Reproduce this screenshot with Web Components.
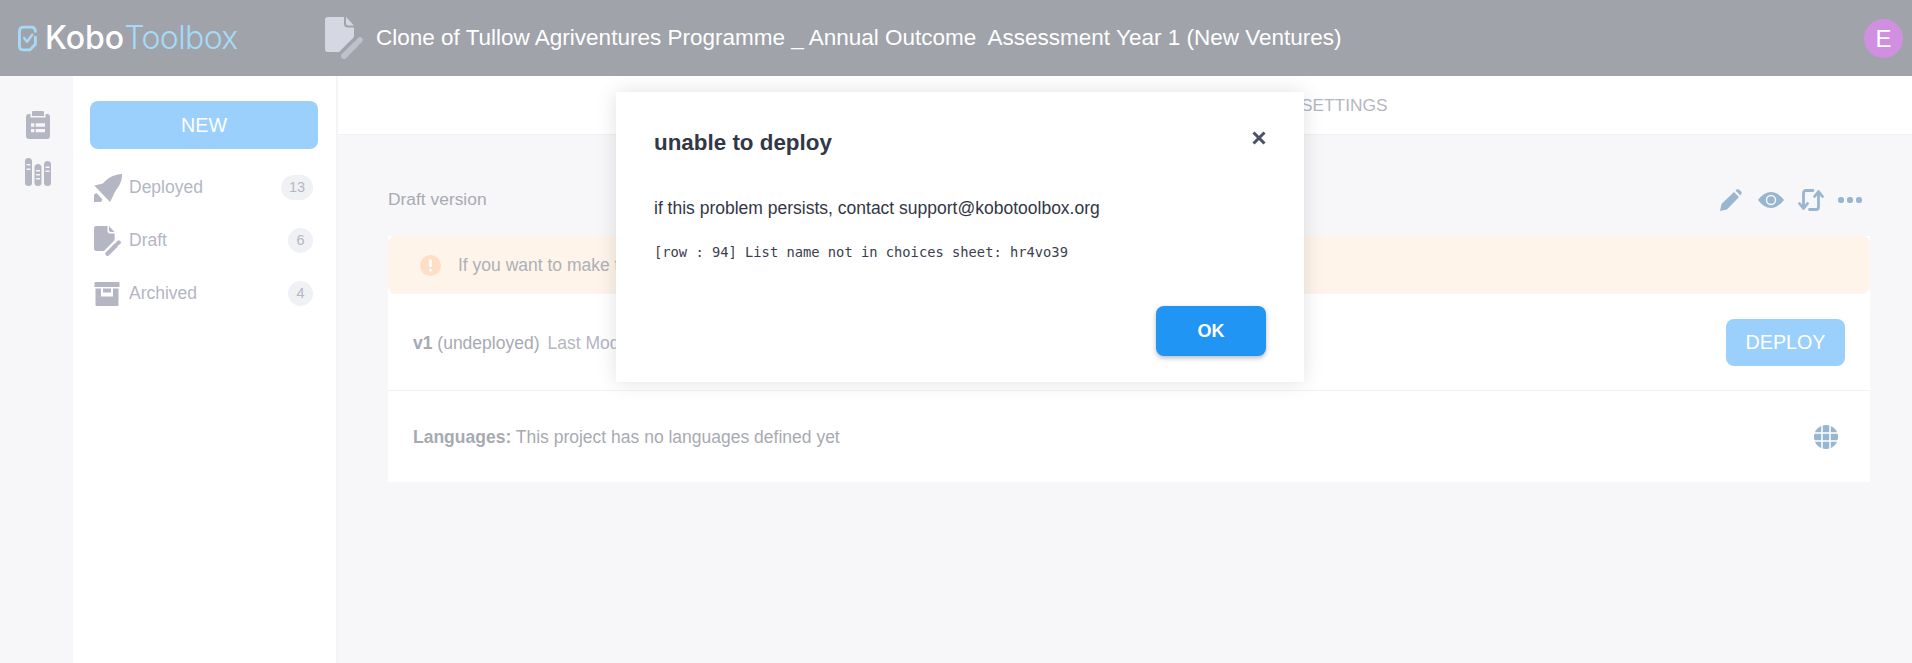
<!DOCTYPE html>
<html>
<head>
<meta charset="utf-8">
<title>KoboToolbox</title>
<style>
  html, body { margin: 0; height: 100%; }
  body { font-family: "Liberation Sans", Arial, sans-serif; overflow: hidden; }
</style>
</head>
<body>
<kobo-app></kobo-app>
<script>
// all icons are drawn on the pixel size they have in the page
const ICONS = {
  draft: { box: '0 0 38 42', body: `
    <path fill="var(--c1)" d="M3 0H19V7Q19 10.500 23 10.500H29V20L14 35H3Q0 35 0 32V3Q0 0 3 0Z"/>
    <path fill="var(--c1)" d="M21 0L29 8.500H23.500Q21 8.500 21 6Z"/>
    <path fill="none" stroke="var(--c2)" stroke-width="6" stroke-linecap="round" d="M19 39L30.500 27.500"/>
    <path fill="none" stroke="var(--c2)" stroke-width="5.500" stroke-linecap="round" d="M33.500 24.500L35 23"/>` },
  clipboard: { box: '0 0 24 28', body: `
    <path fill="currentColor" d="M7 0H17Q18 0 18 1V5H6V1Q6 0 7 0Z"/>
    <path fill="currentColor" fill-rule="evenodd" d="M3 3H4.500V6.500H19.500V3H21Q24 3 24 6V25Q24 28 21 28H3Q0 28 0 25V6Q0 3 3 3ZM5 12.300V15.700H8.300V12.300ZM9.700 12.300V15.700H19V12.300ZM5 18V21.300H8.300V18ZM9.700 18V21.300H19V18Z"/>` },
  library: { box: '0 0 26 28', body: `
    <path fill="currentColor" fill-rule="evenodd" d="M3.500 0Q7 0 7 3.500V25Q7 28 3.500 28Q0 28 0 25V3.500Q0 0 3.500 0ZM1.500 6V7.500H5.500V6ZM1.500 10.500V12H5.500V10.500Z"/>
    <path fill="currentColor" fill-rule="evenodd" d="M13 6Q16.500 6 16.500 9.500V25Q16.500 28 13 28Q9.500 28 9.500 25V9.500Q9.500 6 13 6ZM11 12V13.500H15V12ZM11 16V17.500H15V16ZM11 20V21.500H15V20Z"/>
    <path fill="currentColor" fill-rule="evenodd" d="M22.500 3Q26 3 26 6.500V25Q26 28 22.500 28Q19 28 19 25V6.500Q19 3 22.500 3ZM20.500 8.500V10H24.500V8.500ZM20.500 12.500V14H24.500V12.500Z"/>` },
  rocket: { box: '0 0 28 28', body: `
    <path fill="currentColor" d="M28 0C28.500 6 25.500 12 22 16C21.500 17 20 19 19.500 21L16 28L0.300 11.500L9 9.500C14 3.500 21 0 28 0Z"/>
    <path fill="currentColor" d="M0 28V20.500L2.500 19L8.500 25.500L7 28Z"/>` },
  archive: { box: '0 0 26 24', body: `
    <path fill="currentColor" d="M0.500 1Q0.500 0 1.500 0H24.500Q25.500 0 25.500 1V5H0.500Z"/>
    <path fill="currentColor" fill-rule="evenodd" d="M1.500 6.500H24.500V23Q24.500 24 23.500 24H2.500Q1.500 24 1.500 23ZM7 6.500V14.500H19V6.500H17V10.500H9V6.500Z"/>` },
  pencil: { box: '0 0 22 22', body: `
    <path fill="currentColor" d="M0 22L1.500 15L14 3L19 8L7 20.500ZM15.500 1.500L16.500 0.500Q17.500 0 19 0.500L21.500 3Q22 4.500 21 5.500L20.500 6.500Z"/>` },
  eye: { box: '0 0 26 16', body: `
    <path fill="currentColor" fill-rule="evenodd" d="M0 8Q6 0 13 0Q20 0 26 8Q20 16 13 16Q6 16 0 8ZM13 2.800A5.200 5.200 0 1 0 13 13.200A5.200 5.200 0 1 0 13 2.800Z"/>
    <circle fill="currentColor" cx="13" cy="8" r="3.800"/>` },
  sync: { box: '0 0 26 22', body: `
    <path fill="none" stroke="currentColor" stroke-width="2.800" stroke-linecap="round" stroke-linejoin="round" d="M5.500 19V4Q5.500 1.500 8 1.500H15M1.500 14.500L5.500 19.500L9.500 14.500"/>
    <path fill="none" stroke="currentColor" stroke-width="2.800" stroke-linecap="round" stroke-linejoin="round" d="M20.500 3V18Q20.500 20.500 18 20.500H11.500M16.500 7.500L20.500 2.500L24.500 7.500"/>` },
  dots: { box: '0 0 24 6', body: `
    <rect fill="currentColor" width="6" height="6" rx="2.500"/>
    <rect fill="currentColor" x="9" width="6" height="6" rx="2.500"/>
    <rect fill="currentColor" x="18" width="6" height="6" rx="2.500"/>` },
  globe: { box: '0 0 24 24', body: `
    <circle fill="currentColor" cx="12" cy="12" r="12"/>
    <path stroke="#fff" stroke-width="1.500" d="M8 0V24M16 0V24M0 8H24M0 16H24"/>` },
  alert: { box: '0 0 21 21', body: `
    <circle fill="currentColor" cx="10.500" cy="10.500" r="10.500"/>
    <path fill="#fff" d="M9 4.500H12L11.500 12H9.500ZM9.300 14H11.700V16.400H9.300Z"/>` },
  close: { box: '0 0 14 14', body: `
    <path stroke="currentColor" stroke-width="3" d="M1.500 1.500L12.500 12.500M12.500 1.500L1.500 12.500"/>` },
  logo: { box: '0 0 20 27', body: `
    <path fill="none" stroke="currentColor" stroke-width="3" stroke-linecap="round" stroke-linejoin="round" d="M18.300 6Q18.300 1.500 13.800 1.500H6Q1.500 1.500 1.500 6V21Q1.500 25.500 6 25.500H12.500L18.300 19.500V12"/>
    <path fill="none" stroke="currentColor" stroke-width="2.500" stroke-linecap="round" stroke-linejoin="round" d="M6.500 13L9.500 17L15 9.500"/>` }
};

class KoboIcon extends HTMLElement {
  constructor() {
    super();
    this.attachShadow({ mode: 'open' });
  }
  connectedCallback() {
    const icon = ICONS[this.getAttribute('name')];
    const w = this.getAttribute('w');
    const h = this.getAttribute('h');
    this.shadowRoot.innerHTML = `
      <style>
        :host { display: inline-flex; flex: none; line-height: 0; }
        svg { display: block; }
      </style>
      <svg width="${w}" height="${h}" viewBox="${icon.box}" aria-hidden="true">${icon.body}</svg>`;
  }
}

class KoboHeader extends HTMLElement {
  constructor() {
    super();
    this.attachShadow({ mode: 'open' });
    this.shadowRoot.innerHTML = `
      <style>
        :host {
          display: flex;
          align-items: center;
          height: 76px;
          background: #a0a3aa;
          color: #fff;
        }
        .logo { display: flex; align-items: center; width: 325px; padding-left: 18px; box-sizing: border-box; }
        .logo kobo-icon { color: #a5daf8; margin-right: 8px; }
        .word { font-family: Inter, sans-serif; font-size: 32px; line-height: 40px; font-weight: 500; white-space: nowrap; }
        .word span { color: #a5daf8; font-weight: 300; letter-spacing: -0.600px; }
        .doc { --c1: #d5d8e2; --c2: #bfc1c9; margin-right: 13px; }
        .title { flex: 1; font-size: 22.500px; white-space: nowrap; }
        .avatar {
          width: 39px; height: 39px; margin-right: 9px; border-radius: 50%;
          background: #d08fe0; font-size: 24px; line-height: 39px; text-align: center;
        }
      </style>
      <div class="logo">
        <kobo-icon name="logo" w="19" h="27"></kobo-icon>
        <div class="word">Kobo<span>Toolbox</span></div>
      </div>
      <kobo-icon class="doc" name="draft" w="38" h="42"></kobo-icon>
      <div class="title"><slot></slot></div>
      <div class="avatar">E</div>`;
  }
}

class KoboRail extends HTMLElement {
  constructor() {
    super();
    this.attachShadow({ mode: 'open' });
    this.shadowRoot.innerHTML = `
      <style>
        :host {
          display: flex; flex-direction: column; align-items: center; gap: 19px;
          flex: none; width: 73px; padding: 35px 0 0 3px; box-sizing: border-box;
          background: #f7f7f9; color: #b4b6c4;
        }
      </style>
      <kobo-icon name="clipboard" w="24" h="28"></kobo-icon>
      <kobo-icon name="library" w="26" h="28"></kobo-icon>`;
  }
}

class KoboNavRow extends HTMLElement {
  constructor() {
    super();
    this.attachShadow({ mode: 'open' });
    this.shadowRoot.innerHTML = `
      <style>
        :host {
          display: flex; align-items: center; height: 53px;
          font-size: 17.500px; color: #b4b6c4;
        }
        .ico { display: flex; width: 35px; padding-left: 4px; --c1: #b4b6c4; --c2: #b4b6c4; }
        .label { flex: 1; }
        .count {
          min-width: 25px; height: 25px; padding: 0 3px; box-sizing: border-box; border-radius: 13px;
          background: #f0f1f5; font-size: 14.500px; line-height: 25px; text-align: center;
        }
        :host([wide]) .count { min-width: 32px; }
      </style>
      <div class="ico"><slot name="icon"></slot></div>
      <div class="label"><slot></slot></div>
      <div class="count"></div>`;
  }
  connectedCallback() {
    this.shadowRoot.querySelector('.count').textContent = this.getAttribute('count');
  }
}

class KoboSidebar extends HTMLElement {
  constructor() {
    super();
    this.attachShadow({ mode: 'open' });
    this.shadowRoot.innerHTML = `
      <style>
        :host {
          display: block; flex: none; width: 263px; padding: 25px 23px 0 17px; box-sizing: border-box;
          background: #fff; box-shadow: 1px 0 3px rgba(0,0,0,.025); position: relative;
        }
        button {
          display: block; width: 228px; height: 48px; margin: 0 0 12px; padding: 0; border: 0; border-radius: 8px;
          background: #9ad0fb; color: #fff; font: 19.700px "Liberation Sans", Arial, sans-serif;
        }
      </style>
      <button>NEW</button>
      <div><slot></slot></div>`;
  }
}

class KoboCard extends HTMLElement {
  constructor() {
    super();
    this.attachShadow({ mode: 'open' });
    this.shadowRoot.innerHTML = `
      <style>
        :host {
          display: block; margin: 0 42px 0 50px; background: #fff; color: #a8aab2; font-size: 17.500px;
        }
        .alert {
          display: flex; align-items: center; gap: 17px; height: 58px; padding-left: 32px;
          background: #fef4ea; border-radius: 8px; color: #aeb0b6;
        }
        .alert kobo-icon { color: #fedfc5; }
        .row { display: flex; align-items: center; padding: 0 25px; }
        .version { height: 97px; border-bottom: 1px solid #f0f1f5; box-sizing: border-box; }
        .grow { flex: 1; padding-top: 2px; }
        .muted { color: #b4b6c4; margin-left: 8px; }
        .lang { height: 91px; color: #a8aab2; padding-right: 32px; }
        .lang kobo-icon { color: #98b6d0; }
        b { font-weight: 700; }
        button {
          width: 119px; height: 47px; padding: 0; border: 0; border-radius: 8px;
          background: #9ad0fb; color: #fff; font: 19.700px "Liberation Sans", Arial, sans-serif;
        }
      </style>
      <div class="alert">
        <kobo-icon name="alert" w="21" h="21"></kobo-icon>
        <span>If you want to make t</span>
      </div>
      <div class="row version">
        <div class="grow"><b>v1</b> (undeployed)<span class="muted">Last Mod</span></div>
        <button>DEPLOY</button>
      </div>
      <div class="row lang">
        <div class="grow"><b>Languages:</b> This project has no languages defined yet</div>
        <kobo-icon name="globe" w="24" h="24"></kobo-icon>
      </div>`;
  }
}

class KoboMain extends HTMLElement {
  constructor() {
    super();
    this.attachShadow({ mode: 'open' });
    this.shadowRoot.innerHTML = `
      <style>
        :host { display: block; flex: 1; min-width: 0; background: #f7f7f9; padding-left: 2px; }
        .tabs {
          height: 59px; padding-left: 963px; box-sizing: border-box; background: #fff;
          border-bottom: 1px solid #f0f1f5;
          color: #b4b6c4; font-size: 17.300px; line-height: 58px;
        }
        .head {
          display: flex; align-items: center; height: 101px; padding-top: 28px; box-sizing: border-box; margin: 0 50px;
          color: #a8aab2; font-size: 17.400px;
        }
        .head span { flex: 1; }
        .tools { display: flex; align-items: center; gap: 14px; color: #98b6d0; }
        .tools .first { margin-right: 2px; }
      </style>
      <div class="tabs">SETTINGS</div>
      <div class="head">
        <span>Draft version</span>
        <div class="tools">
          <kobo-icon class="first" name="pencil" w="22" h="22"></kobo-icon>
          <kobo-icon name="eye" w="26" h="16"></kobo-icon>
          <kobo-icon name="sync" w="26" h="22"></kobo-icon>
          <kobo-icon name="dots" w="24" h="6"></kobo-icon>
        </div>
      </div>
      <kobo-card></kobo-card>`;
  }
}

class KoboModal extends HTMLElement {
  constructor() {
    super();
    this.attachShadow({ mode: 'open' });
    this.shadowRoot.innerHTML = `
      <style>
        :host {
          position: absolute; left: 616px; top: 92px;
          display: block; width: 688px; height: 290px; padding: 0 38px 0 38px; box-sizing: border-box;
          background: #fff; box-shadow: 0 0 20px rgba(0,0,0,.12); color: #3a3e4d;
        }
        .top { display: flex; justify-content: space-between; height: 101px; padding-top: 37px; box-sizing: border-box; }
        h2 { margin: 0; font-size: 22.400px; line-height: 27px; font-weight: 700; color: #333745; }
        .top kobo-icon { color: #4a5068; margin-top: 2px; }
        p { margin: 0 0 21px; font-size: 17.500px; line-height: 30px; color: #333745; }
        pre { margin: 0; font: 13.750px/17px "DejaVu Sans Mono", monospace; color: #3a3e4d; }
        .foot { display: flex; justify-content: flex-end; margin-top: 45px; }
        button {
          width: 110px; height: 50px; padding: 0; border: 0; border-radius: 8px;
          background: #2095f3; color: #fff; font: 700 18px "Liberation Sans", Arial, sans-serif;
          box-shadow: 0 2px 5px rgba(0,0,0,.28);
        }
      </style>
      <div class="top">
        <h2>unable to deploy</h2>
        <kobo-icon name="close" w="14" h="14"></kobo-icon>
      </div>
      <p>if this problem persists, contact support@kobotoolbox.org</p>
      <pre>[row : 94] List name not in choices sheet: hr4vo39</pre>
      <div class="foot"><button>OK</button></div>`;
  }
}

class KoboApp extends HTMLElement {
  constructor() {
    super();
    this.attachShadow({ mode: 'open' });
    this.shadowRoot.innerHTML = `
      <style>
        :host { display: flex; flex-direction: column; height: 663px; position: relative; overflow: hidden; }
        .body { display: flex; flex: 1; min-height: 0; }
      </style>
      <kobo-header>Clone of Tullow Agriventures Programme _ Annual Outcome&nbsp; Assessment Year 1 (New Ventures)</kobo-header>
      <div class="body">
        <kobo-rail></kobo-rail>
        <kobo-sidebar>
          <kobo-nav-row count="13" wide><kobo-icon slot="icon" name="rocket" w="28" h="28"></kobo-icon>Deployed</kobo-nav-row>
          <kobo-nav-row count="6"><kobo-icon slot="icon" name="draft" w="27" h="30"></kobo-icon>Draft</kobo-nav-row>
          <kobo-nav-row count="4"><kobo-icon slot="icon" name="archive" w="26" h="24"></kobo-icon>Archived</kobo-nav-row>
        </kobo-sidebar>
        <kobo-main></kobo-main>
      </div>
      <kobo-modal></kobo-modal>`;
  }
}

customElements.define('kobo-icon', KoboIcon);
customElements.define('kobo-header', KoboHeader);
customElements.define('kobo-rail', KoboRail);
customElements.define('kobo-nav-row', KoboNavRow);
customElements.define('kobo-sidebar', KoboSidebar);
customElements.define('kobo-card', KoboCard);
customElements.define('kobo-main', KoboMain);
customElements.define('kobo-modal', KoboModal);
customElements.define('kobo-app', KoboApp);
</script>
</body>
</html>
